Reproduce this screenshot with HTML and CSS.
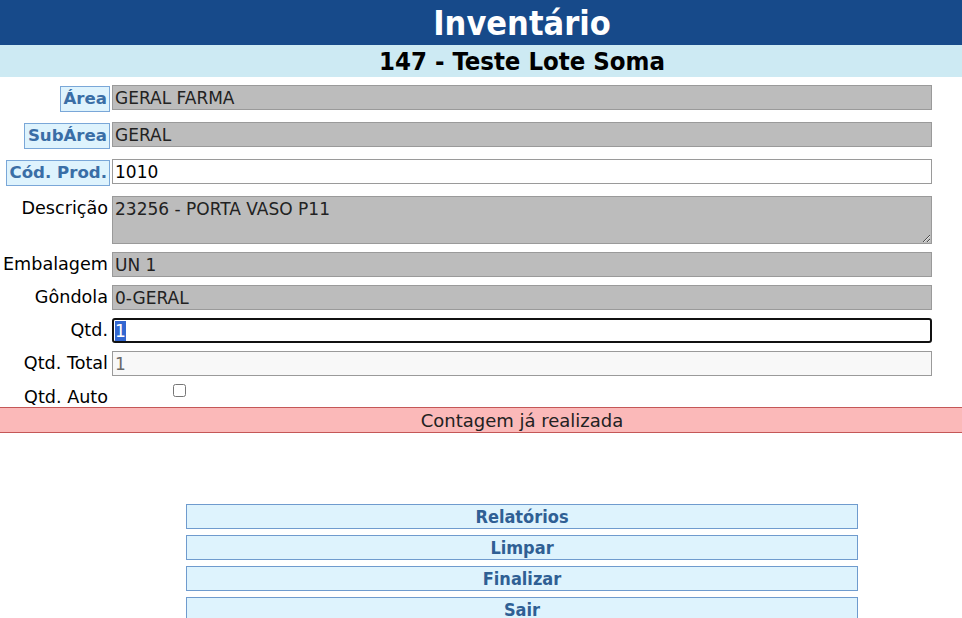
FILE: index.html
```html
<!DOCTYPE html>
<html lang="pt-BR">
<head>
    <meta charset="UTF-8">
    <meta name="viewport" content="width=device-width, initial-scale=1.0">
    <title>Inventário</title>
    <link rel="stylesheet" href="styles.css">
</head>
<body>
    <div class="page">
        <h1 class="titulo">Inventário</h1>
        <h2 class="subtitulo">147 - Teste Lote Soma</h2>

        <div class="form">
            <div class="row row-btn">
                <span class="label"><a href="#" class="lbl-link">Área</a></span>
                <input type="text" class="campo ro" value="GERAL FARMA" readonly>
            </div>
            <div class="row row-btn">
                <span class="label"><a href="#" class="lbl-link">SubÁrea</a></span>
                <input type="text" class="campo ro" value="GERAL" readonly>
            </div>
            <div class="row row-btn">
                <span class="label"><a href="#" class="lbl-link">Cód. Prod.</a></span>
                <input type="text" class="campo" value="1010">
            </div>
            <div class="row">
                <span class="label label-top">Descrição</span>
                <textarea class="campo ro desc" readonly>23256 - PORTA VASO P11</textarea>
            </div>
            <div class="row">
                <span class="label">Embalagem</span>
                <input type="text" class="campo ro" value="UN 1" readonly>
            </div>
            <div class="row">
                <span class="label">Gôndola</span>
                <input type="text" class="campo ro" value="0-GERAL" readonly>
            </div>
            <div class="row">
                <span class="label">Qtd.</span>
                <input type="text" class="campo qtd" id="qtd" value="1">
            </div>
            <div class="row">
                <span class="label">Qtd. Total</span>
                <input type="text" class="campo total" value="1" disabled>
            </div>
            <div class="row row-auto">
                <span class="label label-low">Qtd. Auto</span>
                <input type="checkbox" class="chk" id="auto">
            </div>
        </div>

        <div class="aviso">Contagem já realizada</div>

        <div class="botoes">
            <button class="btn">Relatórios</button>
            <button class="btn">Limpar</button>
            <button class="btn">Finalizar</button>
            <button class="btn">Sair</button>
        </div>
    </div>

    <script>
        var qtd = document.getElementById("qtd");
        qtd.focus();
        qtd.select();
    </script>
</body>
</html>
```

FILE: styles.css
```css
body {
    margin: 0;
    font-family: "DejaVu Sans", Verdana, sans-serif;
    font-size: 17px;
    color: #000;
    background: #fff;
    overflow-x: hidden;
}
.page {
    width: 1044px;
}
.titulo {
    margin: 0;
    height: 45px;
    line-height: 46px;
    background: #174a8a;
    color: #fff;
    font-size: 34px;
    font-stretch: semi-condensed;
    text-align: center;
}
.subtitulo {
    margin: 0;
    height: 32px;
    line-height: 33px;
    background: #cdeaf3;
    color: #000;
    font-size: 25.5px;
    font-stretch: semi-condensed;
    text-align: center;
}
.form {
    display: flex;
    flex-direction: column;
    gap: 8px;
    padding-top: 8px;
}
.row {
    display: flex;
    align-items: flex-start;
    gap: 4px;
}
.row-btn {
    min-height: 29px;
}
.label {
    width: 108px;
    text-align: right;
    line-height: 25px;
    font-size: 17.6px;
    flex-shrink: 0;
}
.label-top {
    line-height: 24px;
}
.label-low {
    padding-top: 2px;
    line-height: 22px;
}
.lbl-link {
    display: inline-block;
    margin: 1px -2px 0 0;
    padding: 0 2px 0 3px;
    line-height: 24px;
    border: 1px solid #7aa7d8;
    background: #def3fd;
    color: #3a6ea6;
    font-size: 16.6px;
    font-weight: bold;
    text-decoration: none;
}
.campo {
    box-sizing: border-box;
    width: 820px;
    height: 25px;
    margin: 0;
    padding: 0 2px;
    border: 1px solid #9a9a9a;
    background: #fff;
    font-family: inherit;
    font-size: 17px;
    color: #000;
    outline: none;
}
.ro {
    background: #bcbcbc;
    color: #222;
}
.desc {
    height: 48px;
    padding-top: 2px;
    resize: vertical;
}
.qtd {
    border: 2px solid #111;
    border-radius: 3px;
    padding-left: 1px;
}
.total {
    background: #f8f8f8;
    color: #6a6a6a;
}
.chk {
    margin: 0 0 0 61px;
    width: 13px;
    height: 13px;
}
.row-auto {
    height: 23px;
}
.aviso {
    height: 24px;
    line-height: 25px;
    background: #fbb9b9;
    border-top: 1px solid #c45757;
    border-bottom: 1px solid #c45757;
    text-align: center;
    font-size: 18px;
    color: #222;
}
.botoes {
    display: flex;
    flex-direction: column;
    align-items: center;
    gap: 6px;
    margin-top: 71px;
}
.btn {
    width: 672px;
    height: 25px;
    padding: 0;
    border: 1px solid #6f9bce;
    background: #def3fd;
    color: #2f5f94;
    font-family: inherit;
    font-size: 18px;
    font-weight: bold;
    font-stretch: semi-condensed;
    cursor: pointer;
}
```
